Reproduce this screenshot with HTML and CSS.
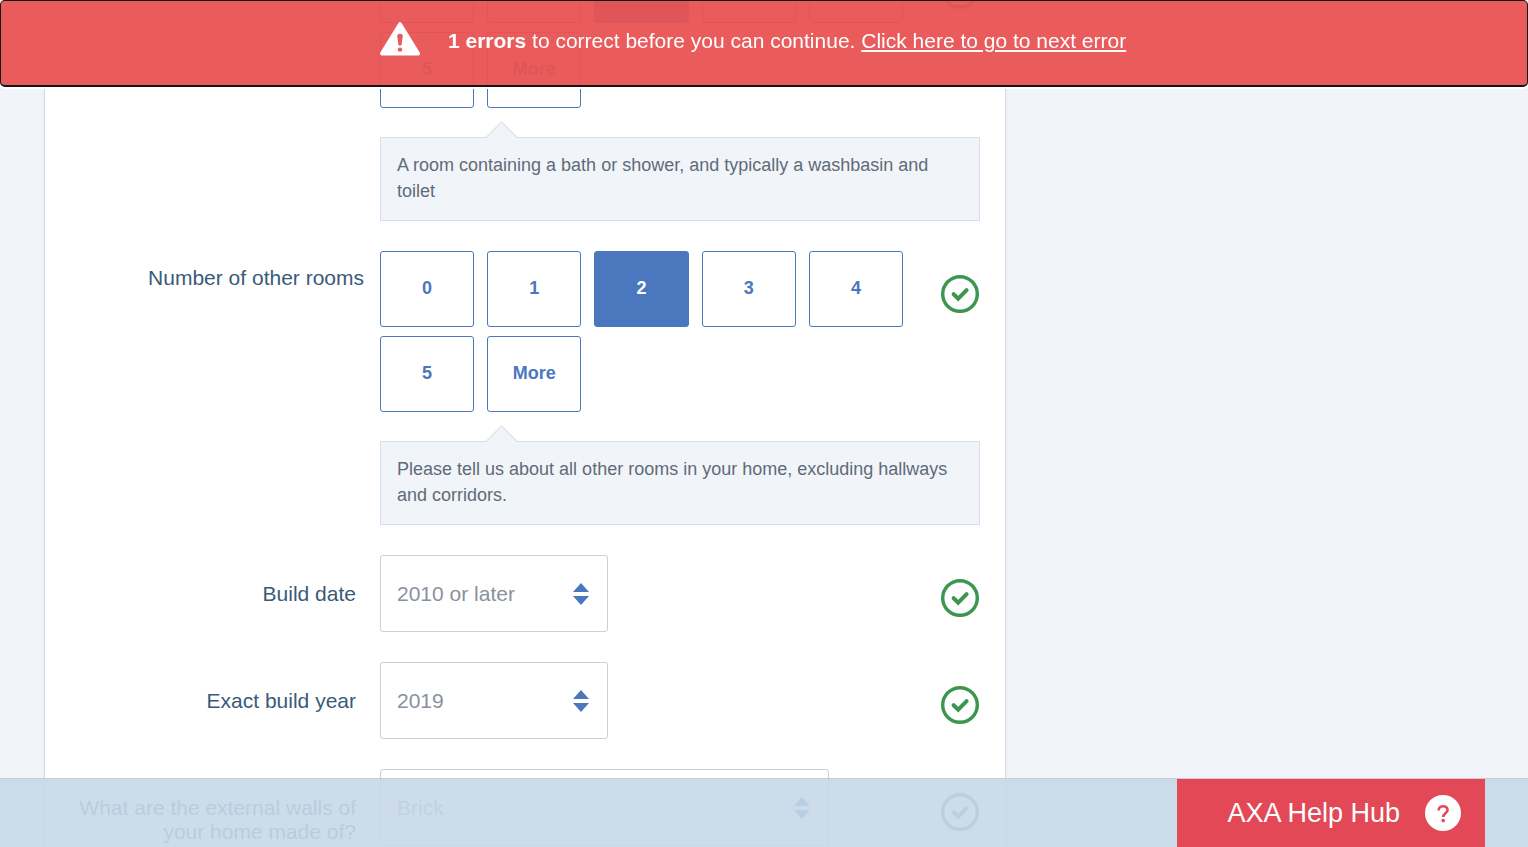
FILE: index.html
```html
<!DOCTYPE html>
<html lang="en">
<head>
<meta charset="utf-8">
<meta name="viewport" content="width=device-width, initial-scale=1">
<title>Your home</title>
<link rel="stylesheet" href="styles.css">
</head>
<body>
<svg class="sprite" aria-hidden="true">
  <symbol id="valid" viewBox="0 0 38 38">
    <circle cx="19" cy="19" r="17.3" fill="none" stroke="currentColor" stroke-width="3.4"/>
    <path d="M12.600 19.200l4.600 4.400 8.400-8.400" fill="none" stroke="currentColor" stroke-width="4" stroke-linecap="round"/>
  </symbol>
  <symbol id="sort" viewBox="0 0 16 22">
    <path d="M8 0l8 9H0zM8 22l8-9H0z" fill="currentColor"/>
  </symbol>
</svg>

<div class="banner" role="alert">
  <div class="wrap banner-inner">
    <svg class="warning" viewBox="0 0 40 34" aria-hidden="true">
      <path d="M20 2.2L38 31.500H2z" fill="#fff" stroke="#fff" stroke-width="4" stroke-linejoin="round"/>
      <path d="M17.200 14c0-3 5.600-3 5.600 0l-1.200 8.600c-.3 1.600-2.900 1.600-3.200 0z" fill="#e95c5b"/>
      <circle cx="20" cy="27.600" r="2.200" fill="#e95c5b"/>
    </svg>
    <p class="banner-text"><strong>1 errors</strong> to correct before you can continue. <a href="#walls">Click here to go to next error</a></p>
  </div>
</div>

<main class="wrap">
  <form class="panel">
    <fieldset class="field" aria-label="Number of bathrooms">
      <span class="label"></span>
      <div class="tiles">
        <label class="tile"><input type="radio" name="bath" aria-label="0"><span></span></label>
        <label class="tile"><input type="radio" name="bath" aria-label="1"><span></span></label>
        <label class="tile"><input type="radio" name="bath" aria-label="2" checked><span></span></label>
        <label class="tile"><input type="radio" name="bath" aria-label="3"><span></span></label>
        <label class="tile"><input type="radio" name="bath" aria-label="4"><span></span></label>
        <label class="tile"><input type="radio" name="bath"><span>5</span></label>
        <label class="tile"><input type="radio" name="bath"><span>More</span></label>
      </div>
      <svg class="valid"><use href="#valid"/></svg>
      <p class="hint">A room containing a bath or shower, and typically a washbasin and toilet</p>
    </fieldset>

    <fieldset class="field" aria-labelledby="rooms-label">
      <span class="label label-group" id="rooms-label">Number of other rooms</span>
      <div class="tiles">
        <label class="tile"><input type="radio" name="rooms"><span>0</span></label>
        <label class="tile"><input type="radio" name="rooms"><span>1</span></label>
        <label class="tile"><input type="radio" name="rooms" checked><span>2</span></label>
        <label class="tile"><input type="radio" name="rooms"><span>3</span></label>
        <label class="tile"><input type="radio" name="rooms"><span>4</span></label>
        <label class="tile"><input type="radio" name="rooms"><span>5</span></label>
        <label class="tile"><input type="radio" name="rooms"><span>More</span></label>
      </div>
      <svg class="valid"><use href="#valid"/></svg>
      <p class="hint">Please tell us about all other rooms in your home, excluding hallways and corridors.</p>
    </fieldset>

    <div class="field">
      <label class="label" for="build">Build date</label>
      <div class="select">
        <select id="build"><option>2010 or later</option></select>
        <svg class="sort"><use href="#sort"/></svg>
      </div>
      <svg class="valid"><use href="#valid"/></svg>
    </div>

    <div class="field">
      <label class="label" for="year">Exact build year</label>
      <div class="select">
        <select id="year"><option>2019</option></select>
        <svg class="sort"><use href="#sort"/></svg>
      </div>
      <svg class="valid"><use href="#valid"/></svg>
    </div>

    <div class="field">
      <label class="label" for="walls">What are the external walls of your home made of?</label>
      <div class="select select-wide">
        <select id="walls"><option>Brick</option></select>
        <svg class="sort"><use href="#sort"/></svg>
      </div>
      <svg class="valid"><use href="#valid"/></svg>
    </div>
  </form>
</main>

<div class="dock">
  <div class="wrap dock-inner">
    <button class="help" type="button">AXA Help Hub
      <svg class="help-icon" viewBox="0 0 36 36" aria-hidden="true">
        <circle cx="18" cy="18" r="18" fill="#fff"/>
        <path d="M13.600 15.400c0-5.600 9-5.400 9-.5 0 3.300-4.400 3.300-4.400 7" fill="none" stroke="#e34856" stroke-width="2.600"/>
        <circle cx="18.200" cy="25.600" r="1.800" fill="#e34856"/>
      </svg>
    </button>
  </div>
</div>
</body>
</html>
```
FILE: styles.css
```css
* { box-sizing: border-box; }

body {
  margin: 0;
  height: 100vh;
  overflow: hidden;
  background: #f1f5fa;
  color: #3a5a7a;
  font-family: "Liberation Sans", Arial, sans-serif;
  font-size: 21px;
  line-height: 24px;
}

p { margin: 0; }

.sprite { display: none; }

.wrap {
  width: 100%;
  max-width: 1440px;
  margin: 0 auto;
}

/* Error banner */
.banner {
  position: fixed;
  top: 0;
  left: 0;
  right: 0;
  z-index: 2;
  border: 2px solid #141414;
  border-width: 1px 1px 2px 1px;
  border-radius: 5px;
  background: rgba(232, 83, 82, 0.95);
  box-shadow: 0 2px 0 #fff;
  color: #fff;
}

.banner-inner {
  display: flex;
  align-items: flex-start;
  gap: 28px;
  padding: 21px 0 29px 336px;
}

.warning { width: 40px; height: 34px; }
.banner-text { padding-top: 7px; }
.banner a { color: inherit; text-underline-offset: 2px; text-decoration-thickness: 2px; }

/* Form */
.panel {
  display: flex;
  flex-direction: column;
  gap: 30px;
  max-width: 962px;
  margin-top: -53px;
  padding: 0 25px 30px;
  border: 1px solid #d8dde5;
  border-width: 0 1px;
  background: #fff;
  box-shadow: 0 0 2px #dde2ea;
}

.field {
  display: grid;
  grid-template-columns: 286px 1fr 39px;
  column-gap: 24px;
  min-width: 0;
  margin: 0;
  padding: 0;
  border: 0;
}

.label {
  padding-top: 27px;
  text-align: right;
}

.label-group { padding-top: 15px; margin-right: -8px; }

.tiles {
  display: grid;
  grid-template-columns: repeat(5, 1fr);
  gap: 9px 13px;
  max-width: 523px;
}

.tile { position: relative; height: 76px; }

.tile input {
  position: absolute;
  inset: 0;
  margin: 0;
  opacity: 0;
}

.tile span {
  display: flex;
  align-items: center;
  justify-content: center;
  height: 100%;
  padding-bottom: 2px;
  border: 1px solid #4b77be;
  border-radius: 3px;
  color: #4b77be;
  font-size: 18px;
  font-weight: bold;
}

.tile input:checked + span { background: #4b77be; color: #fff; }

.valid {
  width: 38px;
  height: 38px;
  margin-top: 24px;
  color: #3c964f;
}

.hint {
  position: relative;
  grid-column: 2 / -1;
  margin-top: 29px;
  padding: 14px 16px 16px;
  border: 1px solid #d5deea;
  background: #f1f5fa;
  color: #5f6b78;
  font-size: 18px;
  line-height: 26px;
}

.hint::before {
  content: "";
  position: absolute;
  top: -12px;
  left: 109px;
  width: 22px;
  height: 22px;
  border: 1px solid #d5deea;
  border-width: 1px 0 0 1px;
  background: linear-gradient(135deg, #f1f5fa 50%, transparent 50%);
  transform: rotate(45deg);
}

.select { position: relative; max-width: 228px; }
.select-wide { max-width: 449px; }

.select select {
  width: 100%;
  height: 77px;
  padding: 0 16px;
  appearance: none;
  border: 1px solid #cdced6;
  border-radius: 3px;
  background: #fff;
  color: #8a919c;
  font: inherit;
}

.sort {
  position: absolute;
  top: 28px;
  right: 19px;
  width: 16px;
  height: 22px;
  color: #4b77be;
  pointer-events: none;
}

/* Bottom dock */
.dock {
  position: fixed;
  left: 0;
  right: 0;
  bottom: 0;
  z-index: 2;
  border-top: 1px solid #c9ced4;
  background: rgba(198, 216, 232, 0.9);
}

.dock-inner { display: flex; justify-content: flex-end; max-width: 1442px; }

.help {
  display: flex;
  align-items: center;
  gap: 25px;
  height: 68px;
  padding: 0 24px 0 50px;
  border: 0;
  background: #e34856;
  color: #fff;
  font-family: "Liberation Sans", Arial, sans-serif;
  font-size: 27px;
}

.help-icon { width: 36px; height: 36px; }
```
